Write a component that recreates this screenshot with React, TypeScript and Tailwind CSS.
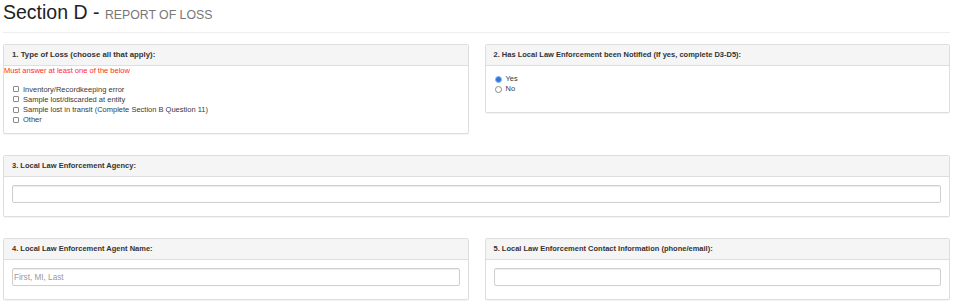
import React from 'react';

function Panel({ title, children, className = '', big }: { title: string; children: React.ReactNode; className?: string; big?: boolean }) {
    return (
        <div className={`bg-white border border-[#dedede] rounded-[2px] shadow-[0_1px_1px_rgba(0,0,0,0.05)] ${className}`}>
            <div
                className={`h-[21px] bg-[#f5f5f5] border-b border-[#dedede] px-[8px] leading-[20px] font-bold text-[#333] whitespace-nowrap ${
                    big ? 'text-[7.8px]' : 'text-[7.5px]'
                }`}
            >
                {title}
            </div>
            {children}
        </div>
    );
}

function Checkbox({ label }: { label: string }) {
    return (
        <label className="flex items-center gap-[4px] h-[10.25px] text-[7.5px] text-[#3a3a3a]">
            <span className="ml-[1px] w-[6px] h-[6px] border border-[#8a8a8a] rounded-[1px] bg-white" />
            {label}
        </label>
    );
}

function Radio({ label, checked }: { label: string; checked?: boolean }) {
    return (
        <label className="flex items-center gap-[4px] h-[10px] text-[7.5px] text-[#3a3a3a]">
            {checked ? (
                <span className="ml-[1px] w-[7px] h-[7px] rounded-full bg-[#2b78e4] border border-[#8fb6ee]" />
            ) : (
                <span className="ml-[1px] w-[7px] h-[7px] rounded-full bg-white border border-[#8a8a8a]" />
            )}
            {label}
        </label>
    );
}

function TextInput({ placeholder }: { placeholder?: string }) {
    return (
        <input
            type="text"
            placeholder={placeholder}
            className="block w-full h-[18px] border border-[#cfcfcf] rounded-[2px] bg-white px-[1px] text-[8.2px] text-[#555] placeholder:text-[#999] shadow-[inset_0_1px_1px_rgba(0,0,0,0.075)] outline-none"
        />
    );
}

export default function App() {
    return (
        <div className="w-[953px] h-[303px] bg-white overflow-hidden" style={{ fontFamily: '"Liberation Sans", Arial, sans-serif' }}>
            <div className="ml-[3px] w-[947px]">
                <h2 className="h-[33px] border-b border-[#eeeeee] text-[19.5px] leading-[24px] whitespace-nowrap">
                    <span className="text-[#222]">Section D - </span>
                    <span className="text-[12.3px] leading-[0] text-[#777] uppercase">Report of Loss</span>
                </h2>

                <div className="mt-[11px] grid grid-cols-2 gap-[16px] items-start">
                    <Panel title="1. Type of Loss (choose all that apply):" big>
                        <div className="text-[7.5px] leading-[9px] text-[#ff2a2a]">Must answer at least one of the below</div>
                        <div className="px-[8px] pt-[9px] pb-[8px]">
                            <Checkbox label="Inventory/Recordkeeping error" />
                            <Checkbox label="Sample lost/discarded at entity" />
                            <Checkbox label="Sample lost in transit (Complete Section B Question 11)" />
                            <Checkbox label="Other" />
                        </div>
                    </Panel>
                    <Panel title="2. Has Local Law Enforcement been Notified (If yes, complete D3-D5):">
                        <div className="px-[8px] pt-[8px] pb-[18px]">
                            <Radio label="Yes" checked />
                            <Radio label="No" />
                        </div>
                    </Panel>
                </div>

                <Panel title="3. Local Law Enforcement Agency:" className="mt-[21px]">
                    <div className="px-[8px] pt-[8px] pb-[13px]">
                        <TextInput />
                    </div>
                </Panel>

                <div className="mt-[21px] grid grid-cols-2 gap-[16px] items-start">
                    <Panel title="4. Local Law Enforcement Agent Name:">
                        <div className="px-[8px] pt-[8px] pb-[13px]">
                            <TextInput placeholder="First, MI, Last" />
                        </div>
                    </Panel>
                    <Panel title="5. Local Law Enforcement Contact Information (phone/email):">
                        <div className="px-[8px] pt-[8px] pb-[13px]">
                            <TextInput />
                        </div>
                    </Panel>
                </div>
            </div>
        </div>
    );
}
